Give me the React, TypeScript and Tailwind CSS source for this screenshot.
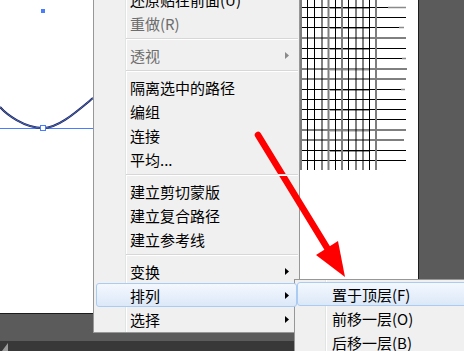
import clsx from "clsx";

type Row = { label: string; disabled?: boolean; arrow?: boolean; active?: boolean } | "sep";

const mainRows: Row[] = [
  { label: "还原贴在前面(U)" },
  { label: "重做(R)", disabled: true },
  "sep",
  { label: "透视", disabled: true, arrow: true },
  "sep",
  { label: "隔离选中的路径" },
  { label: "编组" },
  { label: "连接" },
  { label: "平均..." },
  "sep",
  { label: "建立剪切蒙版" },
  { label: "建立复合路径" },
  { label: "建立参考线" },
  "sep",
  { label: "变换", arrow: true },
  { label: "排列", arrow: true, active: true },
  { label: "选择", arrow: true },
];

const subRows: Row[] = [
  { label: "置于顶层(F)", active: true },
  { label: "前移一层(O)" },
  { label: "后移一层(B)" },
];

const vLines = [
  { x: 301, gray: true },
  { x: 307.5 },
  { x: 314.5 },
  { x: 322 },
  { x: 328.5, gray: true },
  { x: 335.5 },
  { x: 342, gray: true },
  { x: 348.5 },
  { x: 356 },
  { x: 363 },
  { x: 369.5 },
  { x: 376, gray: true },
];

const hLines = [
  { y: 7.5, end: 388, grayEnd: 406 },
  { y: 17.5, end: 406 },
  { y: 27.5, end: 399, grayEnd: 404 },
  { y: 38, end: 406 },
  { y: 48.5, end: 406 },
  { y: 58.5, end: 402, grayEnd: 406 },
  { y: 69, end: 407 },
  { y: 79, end: 406 },
  { y: 89.5, end: 401, grayEnd: 405 },
  { y: 99.5, end: 406 },
  { y: 109.5, end: 406 },
  { y: 119.5, end: 406 },
  { y: 130, end: 406 },
  { y: 140, end: 404 },
  { y: 150.5, end: 406 },
  { y: 160.5, end: 406 },
];

const Arrow = ({ disabled }: { disabled?: boolean }) => (
  <svg width="4" height="7" viewBox="0 0 4 7" className="ml-auto mr-[7px]">
    <path d="M0 0 L4 3.5 L0 7 Z" fill={disabled ? "#8a8a8a" : "#000"} />
  </svg>
);

const MenuRows = ({ rows, textPad, sepPad }: { rows: Row[]; textPad: string; sepPad: string }) => (
  <>
    {rows.map((row, i) =>
      row === "sep" ? (
        <div key={i} className={clsx("relative z-10 h-[8px] pt-[3px] pr-[1px]", sepPad)}>
          <div className="h-[1px] bg-[#d7d7d7] border-b border-white box-content" />
        </div>
      ) : (
        <div key={i} className="relative z-10 h-[24px] px-[2px]">
          <div
            className={clsx(
              "flex h-full items-center rounded-[3px] border",
              row.active
                ? "border-[#aaccf3] bg-gradient-to-b from-[#f4f8fe] to-[#dce8f8]"
                : "border-transparent"
            )}
          >
            <span
              className={clsx(
                "whitespace-nowrap text-[15px] leading-none",
                textPad,
                row.disabled ? "text-[#6d6d6d]" : "text-black"
              )}
            >
              {row.label}
            </span>
            {row.arrow && <Arrow disabled={row.disabled} />}
          </div>
        </div>
      )
    )}
  </>
);

export default function App() {
  return (
    <div
      className="relative h-[351px] w-[464px] overflow-hidden bg-[#5b5b5b]"
      style={{ fontFamily: '"Noto Sans CJK SC", "Noto Sans", sans-serif' }}
    >
      <div className="flex h-full flex-col">
        <div className="h-[341px]">
          <div className="h-[314px] w-[419px] border-b border-r border-[#1c1c1c] bg-white">
            <svg width="418" height="313" viewBox="0 0 418 313" className="block">
              {/* selected path on the left */}
              <line x1="0" y1="128.5" x2="93" y2="128.5" stroke="#4a7cff" strokeWidth="1" />
              <path
                d="M0 107 C6 114 24 128 43 128 C58 128 75 113 93 98"
                fill="none"
                stroke="#1b1b3c"
                strokeWidth="2"
              />
              <path
                d="M0 107 C6 114 24 128 43 128 C58 128 75 113 93 98"
                fill="none"
                stroke="#4a7cff"
                strokeWidth="0.8"
              />
              <rect x="40.5" y="125.5" width="5" height="5" fill="#fff" stroke="#4a7cff" />
              <rect x="41" y="9" width="4" height="4" fill="#4a7cff" />

              {/* grid object */}
              {hLines.map((h, i) => (
                <g key={i}>
                  {h.grayEnd && (
                    <line x1={h.end} y1={h.y} x2={h.grayEnd} y2={h.y} stroke="#8a8a8a" strokeWidth="1.5" />
                  )}
                  <line x1="300" y1={h.y} x2={h.end} y2={h.y} stroke="#000" strokeWidth="1" />
                  {i % 2 === 0 && (
                    <line x1="330" y1={h.y + 1} x2="370" y2={h.y + 1} stroke="#9a9a9a" strokeWidth="1" />
                  )}
                </g>
              ))}
              {vLines.map((v, i) => (
                <line
                  key={i}
                  x1={v.x}
                  y1="0"
                  x2={v.x}
                  y2="170"
                  stroke={v.gray ? "#7d7d7d" : "#000"}
                  strokeWidth={v.gray ? 2 : 1}
                />
              ))}
            </svg>
          </div>
        </div>
        <div className="flex h-[10px] items-end bg-[#383838] pl-[2px]">
          <svg width="6" height="8" viewBox="0 0 6 8">
            <path d="M6 0 L6 8 L0 8 Z" fill="#9c9c9c" />
          </svg>
        </div>
      </div>

      {/* context menu */}
      <div className="absolute left-[93px] top-[-16px] w-[207px] border border-[#979797] bg-[#f0f0f0] pb-[1px] pt-[2px]">
        <div className="absolute bottom-0 left-[31px] top-0 w-[2px] border-l border-[#e2e3e3] bg-white" />
        <MenuRows rows={mainRows} textPad="pl-[33px]" sepPad="pl-[32px]" />
      </div>

      {/* sub menu */}
      <div className="absolute left-[294px] top-[279px] w-[200px] border border-[#979797] bg-[#f0f0f0] pt-[2px]">
        <div className="absolute bottom-0 left-[30px] top-0 w-[2px] border-l border-[#e2e3e3] bg-white" />
        <MenuRows rows={subRows} textPad="pl-[34px]" sepPad="pl-[31px]" />
      </div>

      {/* red annotation arrow */}
      <svg className="pointer-events-none absolute left-0 top-0" width="464" height="351" viewBox="0 0 464 351">
        <line x1="258" y1="135" x2="329" y2="251" stroke="#ff0000" strokeWidth="6.5" strokeLinecap="round" />
        <path d="M345 277 L316 255 L338 241 Z" fill="#ff0000" />
      </svg>
    </div>
  );
}
